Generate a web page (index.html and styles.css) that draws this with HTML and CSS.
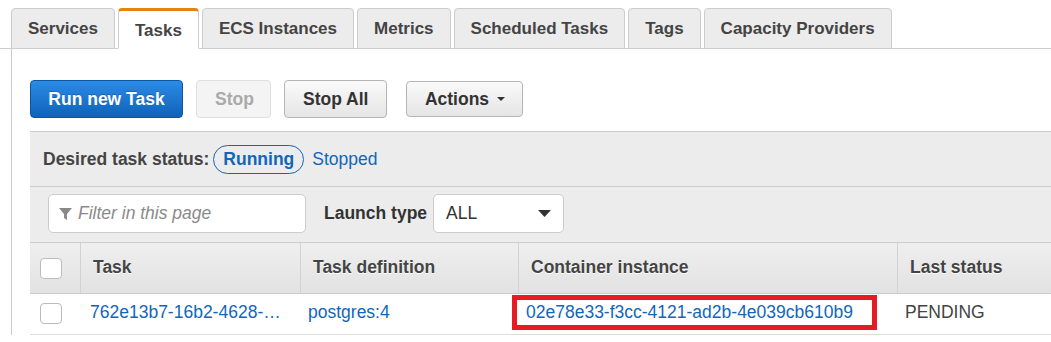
FILE: index.html
```html
<!DOCTYPE html>
<html lang="en">
<head>
  <meta charset="UTF-8">
  <meta name="viewport" content="width=device-width, initial-scale=1.0">
  <title>Cluster Tasks</title>
  <link rel="stylesheet" href="styles.css">
</head>
<body>
  <div class="tabs">
    <div class="tab">Services</div>
    <div class="tab active">Tasks</div>
    <div class="tab">ECS Instances</div>
    <div class="tab">Metrics</div>
    <div class="tab">Scheduled Tasks</div>
    <div class="tab">Tags</div>
    <div class="tab">Capacity Providers</div>
  </div>

  <div class="panel">
    <div class="toolbar">
      <button class="btn btn-primary">Run new Task</button>
      <button class="btn" disabled>Stop</button>
      <button class="btn">Stop All</button>
      <button class="btn btn-actions">Actions <span class="caret"></span></button>
    </div>

    <div class="grid-box">
      <div class="status-row">
        <span class="status-label">Desired task status:</span>
        <span class="pill">Running</span>
        <a class="link" href="#">Stopped</a>
      </div>

      <div class="filter-row">
        <div class="filter-input">
          <svg width="13" height="12" viewBox="0 0 13 12"><path d="M0 0h13L8 6v6L5 10V6z" fill="#8a8a8a"/></svg>
          <span class="placeholder">Filter in this page</span>
        </div>
        <span class="filter-label">Launch type</span>
        <div class="select">
          <span>ALL</span>
          <svg width="13" height="7" viewBox="0 0 13 7"><path d="M0 0h13L6.5 7z" fill="#333"/></svg>
        </div>
      </div>

      <div class="table-head">
        <div class="cell check-cell"><span class="checkbox"></span></div>
        <div class="cell">Task</div>
        <div class="cell">Task definition</div>
        <div class="cell">Container instance</div>
        <div class="cell">Last status</div>
      </div>
    </div>

    <div class="table-row">
      <div class="cell check-cell"><span class="checkbox"></span></div>
      <div class="cell first">
        <a class="link" href="#">762e13b7-16b2-4628-…</a>
      </div>
      <div class="cell"><a class="link" href="#">postgres:4</a></div>
      <div class="cell">
        <span class="marked"><a class="link" href="#">02e78e33-f3cc-4121-ad2b-4e039cb610b9</a></span>
      </div>
      <div class="cell">PENDING</div>
    </div>
  </div>
</body>
</html>
```

FILE: styles.css
```css
body {
  margin: 0;
  font-family: "Liberation Sans", Arial, sans-serif;
  font-size: 17.5px;
  color: #444;
  background: #fff;
  overflow: hidden;
}
.tabs {
  display: flex;
  gap: 3px;
  padding: 8px 0 0 11px;
  border-bottom: 1px solid #ccc;
  min-width: 1100px;
}
.tab {
  box-sizing: border-box;
  height: 41px;
  margin-bottom: -1px;
  padding: 0 16px;
  display: flex;
  align-items: center;
  font-size: 17px;
  font-weight: bold;
  color: #444;
  background: #ececec;
  border: 1px solid #ccc;
  border-radius: 4px 4px 0 0;
}
.tab.active {
  background: #fff;
  border-top: 3px solid #e8820c;
  border-bottom-color: #fff;
  padding-top: 2px;
}
.panel {
  margin-left: 11px;
  border-left: 1px solid #ccc;
  padding: 31px 0 0 18px;
  min-width: 1100px;
}
.toolbar {
  display: flex;
  align-items: center;
  gap: 13px;
  height: 38px;
}
.btn {
  box-sizing: border-box;
  height: 38px;
  padding: 0 18px;
  font-family: inherit;
  font-size: 17.5px;
  font-weight: bold;
  white-space: nowrap;
  color: #333;
  background: linear-gradient(#fafafa, #e5e5e5);
  border: 1px solid #b5b5b5;
  border-radius: 4px;
}
.btn-primary {
  width: 153px;
  padding: 0;
  color: #fff;
  background: linear-gradient(#2b8be6, #0f62b8);
  border-color: #0c559f;
  text-shadow: 0 -1px 0 rgba(0,0,0,0.2);
}
.btn[disabled] {
  width: 75px;
  color: #aaa;
  background: #f4f4f4;
  border-color: #e0e0e0;
}
.btn-actions {
  height: 36px;
  width: 117px;
  margin-left: 6px;
  display: flex;
  align-items: center;
  justify-content: center;
  gap: 8px;
}
.caret {
  width: 0;
  height: 0;
  border-left: 4px solid transparent;
  border-right: 4px solid transparent;
  border-top: 4px solid #333;
}
.grid-box {
  margin-top: 13px;
  background: #ececec;
  border-top: 1px solid #ccc;
}
.status-row {
  height: 54px;
  display: flex;
  align-items: center;
  padding-left: 13px;
  border-bottom: 1px solid #ccc;
}
.status-label {
  font-weight: bold;
}
.pill {
  box-sizing: border-box;
  height: 29px;
  margin: 0 8px 0 4px;
  padding: 0 9px;
  display: flex;
  align-items: center;
  font-weight: bold;
  color: #1166bb;
  border: 1px solid #1166bb;
  border-radius: 15px;
}
.link {
  color: #1166bb;
  text-decoration: none;
}
.filter-row {
  display: flex;
  align-items: center;
  padding: 7px 0 9px 18px;
  border-bottom: 1px solid #ccc;
}
.filter-input {
  box-sizing: border-box;
  width: 258px;
  height: 39px;
  display: flex;
  align-items: center;
  gap: 6px;
  padding-left: 10px;
  background: #fff;
  border: 1px solid #ccc;
  border-radius: 5px;
}
.placeholder {
  font-style: italic;
  color: #8a8a8a;
}
.filter-label {
  margin: 0 6px 0 18px;
  font-weight: bold;
  color: #333;
}
.select {
  box-sizing: border-box;
  width: 131px;
  height: 39px;
  display: flex;
  align-items: center;
  justify-content: space-between;
  padding: 0 12px 0 12px;
  color: #333;
  background: #fff;
  border: 1px solid #ccc;
  border-radius: 5px;
}
.table-head,
.table-row {
  display: grid;
  grid-template-columns: 50px 220px 218px 379px 1fr;
}
.table-head {
  height: 50px;
  background: linear-gradient(#efefef, #e2e2e2);
  border-bottom: 1px solid #ccc;
}
.table-head .cell {
  padding: 14px 0 0 12px;
  font-weight: bold;
  color: #444;
  text-shadow: 0 1px 0 #fff;
  border-left: 1px solid #d2d2d2;
}
.table-head .check-cell {
  border-left: none;
}
.table-row {
  height: 40px;
  border-bottom: 1px solid #ddd;
}
.table-row .cell {
  padding: 8px 0 0 8px;
  line-height: 20px;
  white-space: nowrap;
}
.table-row .first {
  padding-left: 10px;
}
.cell {
  line-height: 20px;
}
.check-cell {
  display: flex;
}
.table-head .check-cell {
  padding: 15px 0 0 10px;
}
.table-row .check-cell {
  padding: 9px 0 0 10px;
}
.checkbox {
  box-sizing: border-box;
  width: 22px;
  height: 21px;
  background: #fff;
  border: 1px solid #bbb;
  border-radius: 4px;
}
.marked {
  display: inline-block;
  margin: -9px 0 0 -14px;
  padding: 4px 19px 5px 9px;
  line-height: 16px;
  border: 5px solid #e51c23;
}
.marked .link {
  line-height: 16px;
}
```
